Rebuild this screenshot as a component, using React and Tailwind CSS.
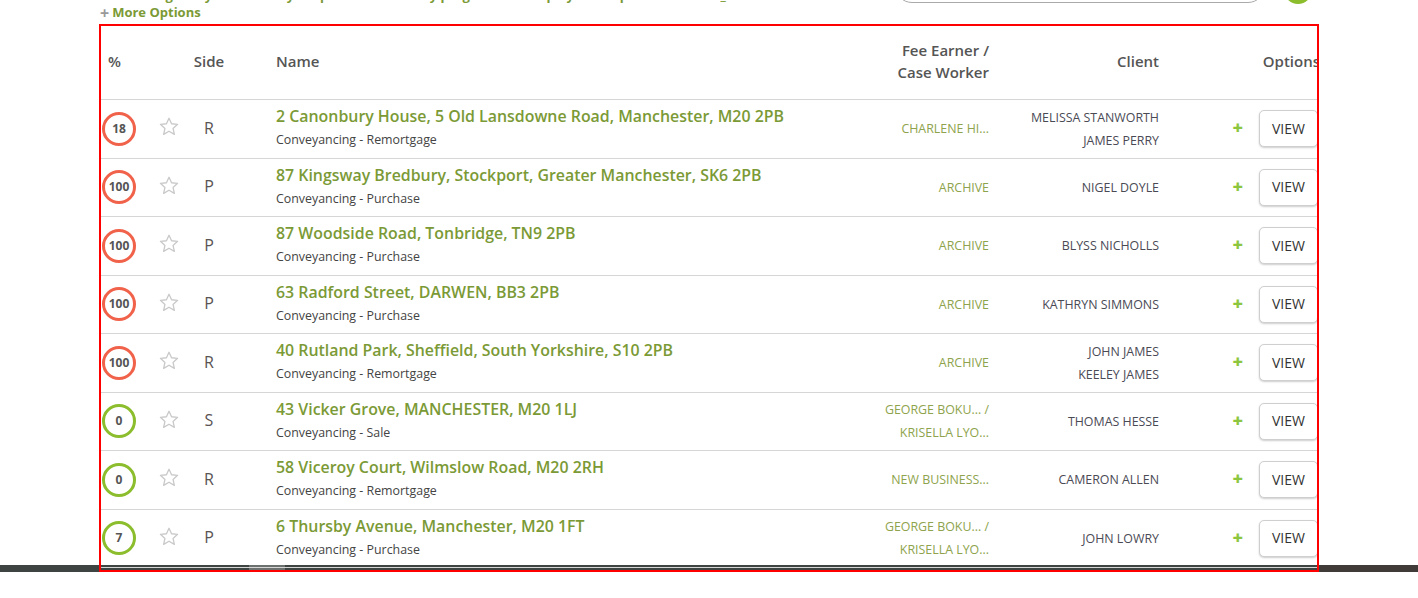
import React from 'react'

const rows = [
    { pct: 18, ok: false, side: 'R', name: '2 Canonbury House, 5 Old Lansdowne Road, Manchester, M20 2PB', type: 'Conveyancing - Remortgage', fee: ['CHARLENE HI...'], client: ['MELISSA STANWORTH', 'JAMES PERRY'] },
    { pct: 100, ok: false, side: 'P', name: '87 Kingsway Bredbury, Stockport, Greater Manchester, SK6 2PB', type: 'Conveyancing - Purchase', fee: ['ARCHIVE'], client: ['NIGEL DOYLE'] },
    { pct: 100, ok: false, side: 'P', name: '87 Woodside Road, Tonbridge, TN9 2PB', type: 'Conveyancing - Purchase', fee: ['ARCHIVE'], client: ['BLYSS NICHOLLS'] },
    { pct: 100, ok: false, side: 'P', name: '63 Radford Street, DARWEN, BB3 2PB', type: 'Conveyancing - Purchase', fee: ['ARCHIVE'], client: ['KATHRYN SIMMONS'] },
    { pct: 100, ok: false, side: 'R', name: '40 Rutland Park, Sheffield, South Yorkshire, S10 2PB', type: 'Conveyancing - Remortgage', fee: ['ARCHIVE'], client: ['JOHN JAMES', 'KEELEY JAMES'] },
    { pct: 0, ok: true, side: 'S', name: '43 Vicker Grove, MANCHESTER, M20 1LJ', type: 'Conveyancing - Sale', fee: ['GEORGE BOKU... /', 'KRISELLA LYO...'], client: ['THOMAS HESSE'] },
    { pct: 0, ok: true, side: 'R', name: '58 Viceroy Court, Wilmslow Road, M20 2RH', type: 'Conveyancing - Remortgage', fee: ['NEW BUSINESS...'], client: ['CAMERON ALLEN'] },
    { pct: 7, ok: true, side: 'P', name: '6 Thursby Avenue, Manchester, M20 1FT', type: 'Conveyancing - Purchase', fee: ['GEORGE BOKU... /', 'KRISELLA LYO...'], client: ['JOHN LOWRY'] },
]

const cols = 'grid grid-cols-[49px_40px_38px_561px_200px_170px_100px_58px]'

function Star() {
    return (
        <svg width="20" height="19" viewBox="0 0 24 23" fill="none" stroke="#c9c9c9" strokeWidth="1.6" strokeLinejoin="round">
            <polygon points="12,1.5 15.1,8.2 22.4,8.9 16.9,13.8 18.5,21 12,17.2 5.5,21 7.1,13.8 1.6,8.9 8.9,8.2" />
        </svg>
    )
}

function Row({ r }) {
    return (
        <div className={`${cols} h-[58.5px] border-b border-[#d6d6d6] text-[12.4px]`}>
            <div className="flex items-center pl-[1px]">
                <div className={`flex h-[34px] w-[34px] items-center justify-center rounded-full border-[3px] text-[12px] font-bold text-[#555] ${r.ok ? 'border-[#8bbd2c]' : 'border-[#f1624b]'}`}>
                    {r.pct}
                </div>
            </div>
            <div className="flex items-center justify-center pb-[4px] pr-[2px]">
                <Star />
            </div>
            <div className="flex items-center justify-center pb-[2px] text-[16px] text-[#5a5353]">{r.side}</div>
            <div className="flex flex-col justify-center pl-[48px] pb-[1px] leading-[23px]">
                <div className="text-[15.9px] font-semibold text-[#7b9a36] whitespace-nowrap">{r.name}</div>
                <div className="text-[#444]">{r.type}</div>
            </div>
            <div className="flex flex-col items-end justify-center leading-[23px] text-[#8ea34c]">
                {r.fee.map(f => <div key={f}>{f}</div>)}
            </div>
            <div className="flex flex-col items-end justify-center leading-[23px] text-[#4a4a55]">
                {r.client.map(c => <div key={c}>{c}</div>)}
            </div>
            <div className="flex items-center justify-end pr-[16px] pb-[3px]">
                <span className="text-[18px] font-extrabold leading-none text-[#8cc63f]">+</span>
            </div>
            <div className="flex items-center">
                <button className="h-[37px] w-[59px] shrink-0 rounded-[5px] border border-[#cfcfcf] bg-white pb-[1px] text-[14px] text-[#333] shadow-[0_1px_2px_rgba(0,0,0,0.2)]">VIEW</button>
            </div>
        </div>
    )
}

export default function App() {
    return (
        <div className="relative h-[598px] w-[1418px] overflow-hidden bg-white font-['Open_Sans','Liberation_Sans',sans-serif]">
            <div className="flex h-[4px] items-end overflow-hidden">
                <span className="ml-[118px] whitespace-nowrap text-[13px] font-bold leading-[18px] text-[#7b9a36]">
                    Showing every matter for your practice sorted by progress and displayed for quick reference _
                </span>
                <div className="ml-auto mb-[1px] h-[34px] w-[370px] rounded-full border border-[#aaa]" />
                <div className="ml-[19px] mr-[106px] h-[28px] w-[28px] rounded-full bg-[#8bbd2c]" />
            </div>
            <div className="flex h-[20px] items-center pl-[100px] pb-[2px] text-[13px] font-bold">
                <span className="mr-[3px] text-[16px] leading-none text-[#999]">+</span>
                <span className="text-[#7b9a36]">More Options</span>
            </div>
            <div className="relative z-20 ml-[99px] h-[548px] w-[1220px] overflow-hidden border-2 border-[#ff0000]">
                <div className={`${cols} h-[74px] border-b border-[#d6d6d6] text-[15px] font-semibold leading-[22px] text-[#555]`}>
                    <div className="flex items-center pl-[7px] pb-[4px]">%</div>
                    <div />
                    <div className="flex items-center justify-center pb-[4px]">Side</div>
                    <div className="flex items-center pl-[48px] pb-[4px]">Name</div>
                    <div className="flex flex-col items-end justify-center pb-[4px]">
                        <div>Fee Earner /</div>
                        <div>Case Worker</div>
                    </div>
                    <div className="flex items-center justify-end pb-[4px]">Client</div>
                    <div />
                    <div className="flex items-center justify-end mr-[-3px] pb-[4px] whitespace-nowrap">Options</div>
                </div>
                {rows.map((r, i) => <Row key={i} r={r} />)}
            </div>
            <div className="absolute left-0 top-[565px] z-10 flex h-[7px] w-full bg-[#3e4442]">
                <div className="ml-[249px] h-full w-[36px] bg-[#6c706e]" />
                <div className="ml-auto h-full w-[98px] bg-[#403b38]" />
            </div>
        </div>
    )
}
